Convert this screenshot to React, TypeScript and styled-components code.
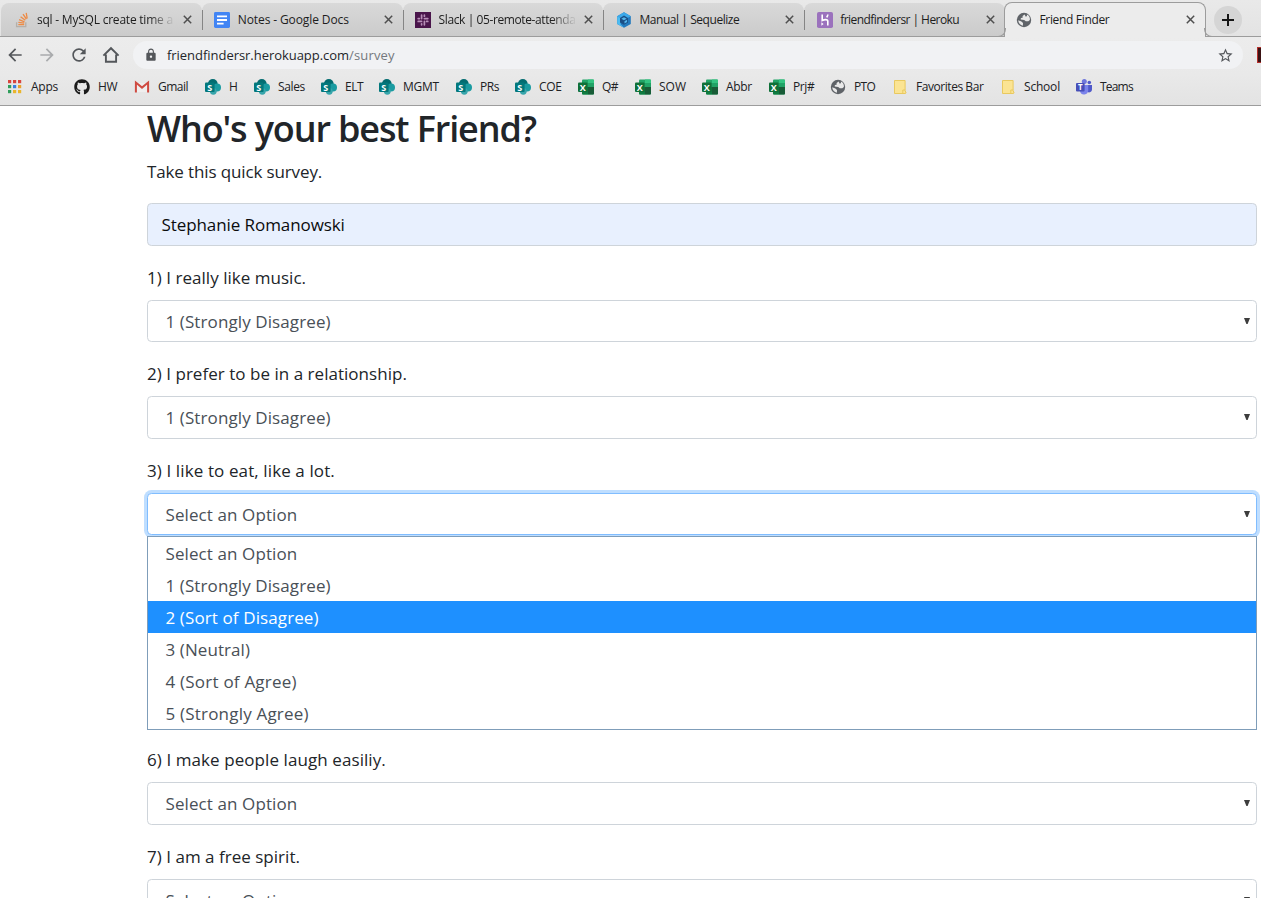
import React from 'react';
import styled, { createGlobalStyle, css } from 'styled-components';
import { MdArrowBack, MdArrowForward, MdRefresh, MdLock, MdStarBorder } from 'react-icons/md';
import { FaGithub } from 'react-icons/fa';

const GlobalStyle = createGlobalStyle`
  * { box-sizing: border-box; }
  html, body { margin: 0; background: #fff; }
  body { font-family: "Open Sans", "Noto Sans", sans-serif; color: #212529; }
`;

const Window = styled.div`
  width: 1261px;
  height: 898px;
  overflow: hidden;
  display: flex;
  flex-direction: column;
  background: #fff;
`;

/* ---------- icons ---------- */

const Svg = ({ s = 16, children }: { s?: number; children: React.ReactNode }) => (
  <svg width={s} height={s} viewBox="0 0 16 16">{children}</svg>
);

const StackOverflowIcon = () => (
  <Svg>
    <path d="M2.6 10.2v4.5h9.2v-4.5" fill="none" stroke="#b5afa9" strokeWidth="1.3" />
    <g stroke="#ee8b45" strokeWidth="1.3">
      <path d="M4.3 12.6h5.9M4.4 10.3l5.8.9M5.1 7.6l5.4 2.2M6.6 4.8l4.7 3.5M9 2.2l3.4 4.8M12.2.9l1 5.6" />
    </g>
  </Svg>
);

const DocsIcon = () => (
  <Svg>
    <rect width="16" height="16" rx="1.4" fill="#4285f4" />
    <path d="M3 4.4h10M3 8h10M3 11.6h6.6" stroke="#fff" strokeWidth="1.9" />
  </Svg>
);

const SlackIcon = () => (
  <Svg>
    <rect width="16" height="16" fill="#4a154b" />
    <g stroke="#b88fb8" strokeWidth="1.7" strokeLinecap="round">
      <path d="M6.6 3.2v3.4M3.2 6.6h1.2M9.4 6.6h3.4M9.4 3.2v1M9.4 9.4v3.4M11.6 9.4h1.2M3.2 9.4h3.4M6.6 11.8v1" />
    </g>
  </Svg>
);

const SequelizeIcon = () => (
  <Svg>
    <path d="M8 .3l6.8 3.9v7.7L8 15.8l-6.8-3.9V4.2z" fill="#2379bd" />
    <path d="M8 .3l6.8 3.9L8 8 1.2 4.2z" fill="#3ba9ea" />
    <path d="M1.2 4.2L4.600 6v6.200L8 15.800l-6.800-3.900z" fill="#4dbcf2" />
    <path d="M8 3.600l4 2.300v4.500l-4 2.300-4-2.300V5.900z" fill="#1b4f86" />
    <path d="M8 5.300l2.600 1.500L8 8.300 5.400 6.800zM8.500 9.200l2.600-1.500v2.200l-2.600 1.500z" fill="#55b7ec" />
  </Svg>
);

const HerokuIcon = () => (
  <Svg>
    <rect width="16" height="16" rx="1.8" fill="#9b72bd" />
    <path d="M5.200 2.600v5.900c1.800-.9 5.600-1.600 5.600.6v4.500M10.800 2.600c0 1.100-.4 2-1.200 2.800" fill="none" stroke="#fff" strokeWidth="1.600" />
    <path d="M4.400 10.300l2.200 1.700-2.200 1.800z" fill="#fff" />
  </Svg>
);

const GlobeIcon = () => (
  <Svg>
    <circle cx="8" cy="8" r="7.200" fill="#5f6368" />
    <path d="M8.600 2.400L6.600 4v1.700l-1.700.4-.2 1.500 3.500.3 1.600 1.400 2.500-.1 1.600-1.300c.3-2.700-1-4.700-3-5.500l.1 1.600-1.200.8z" fill="#e9e9e9" />
    <path d="M2.200 8.300l3.200 1.100 1.600 1.600-.1 2.700C4.100 13.200 2.400 11 2.200 8.300z" fill="#e9e9e9" />
  </Svg>
);

const AppsIcon = () => (
  <Svg>
    {['#d9453d', '#d9453d', '#d9453d', '#2f9e5b', '#3c7fe0', '#eaa12c', '#2f9e5b', '#eab52c', '#eab52c'].map((c, i) => (
      <rect key={i} x={1 + (i % 3) * 5} y={1 + Math.floor(i / 3) * 5} width="3.200" height="3.200" fill={c} />
    ))}
  </Svg>
);

const GmailIcon = () => (
  <Svg>
    <path d="M2.500 4v9h11V4z" fill="#efeeee" />
    <path d="M1.900 13.600V3.600L8 8.600l6.100-5v10" fill="none" stroke="#cf4a41" strokeWidth="2" />
  </Svg>
);

const IconLetter = styled.text`
  font-family: "Open Sans", sans-serif;
  font-weight: 700;
  fill: #fff;
  text-anchor: middle;
`;

const SharePointIcon = () => (
  <Svg>
    <circle cx="7.800" cy="5" r="4.900" fill="#036c70" />
    <circle cx="12" cy="8.400" r="4" fill="#1a9ba1" />
    <circle cx="8.300" cy="12.300" r="3.400" fill="#37a5ab" />
    <rect x="0" y="3.500" width="9.600" height="9.600" rx="1" fill="#03787c" />
    <IconLetter x="4.800" y="11.500" fontSize="9">S</IconLetter>
  </Svg>
);

const ExcelIcon = () => (
  <Svg>
    <rect x="4" y=".4" width="12" height="15.200" rx="1" fill="#21a366" />
    <path d="M4 8h6v7.600H5a1 1 0 0 1-1-1z" fill="#107c41" />
    <path d="M10 8h6v6.600a1 1 0 0 1-1 1h-5z" fill="#185c37" />
    <path d="M10 .4h5a1 1 0 0 1 1 1V4h-6z" fill="#33c481" />
    <rect x="0" y="3.500" width="9.600" height="9.600" rx="1" fill="#0f7038" />
    <IconLetter x="4.800" y="11.500" fontSize="9">X</IconLetter>
  </Svg>
);

const FolderIcon = () => (
  <Svg>
    <path d="M2.500 1.500h10.600v10l1 2.500-1 .5H2.500z" fill="#fbe493" stroke="#e9c95f" />
    <path d="M10.800 14v-3h2.300" fill="none" stroke="#e9c95f" />
  </Svg>
);

const TeamsIcon = () => (
  <Svg>
    <circle cx="8.300" cy="2.600" r="2.500" fill="#6f76dc" />
    <circle cx="13.300" cy="3.500" r="1.800" fill="#5059c9" />
    <path d="M11 6h5v4.500a3 3 0 0 1-4.500 2.600z" fill="#5059c9" />
    <path d="M4 6h8.200v5.500a4.200 4.200 0 0 1-8.200 1z" fill="#7b83eb" />
    <rect x="0" y="4" width="8.600" height="8.600" rx="1" fill="#464eb8" />
    <IconLetter x="4.300" y="11.300" fontSize="8">T</IconLetter>
  </Svg>
);

const HomeIcon = () => (
  <svg width="20" height="20" viewBox="0 0 20 20">
    <path d="M2.400 10.600L10 3.200l7.600 7.400M4.900 9.500v7.300h10.200V9.500" fill="none" stroke="#54575b" strokeWidth="1.900" />
  </svg>
);

const CloseIcon = () => (
  <svg width="9" height="9" viewBox="0 0 9 9">
    <path d="M.8.800l7.400 7.400M8.200.8L.8 8.200" stroke="#4f4f4f" strokeWidth="1.500" />
  </svg>
);

const PlusIcon = () => (
  <svg width="12" height="12" viewBox="0 0 12 12">
    <path d="M6 0v12M0 6h12" stroke="#151515" strokeWidth="2" />
  </svg>
);

/* ---------- browser chrome ---------- */

const TabStrip = styled.div`
  flex: none;
  height: 37px;
  display: flex;
  align-items: flex-end;
  padding-left: 1px;
  background: linear-gradient(#e9e9e9, #e3e3e3);
  border-bottom: 1px solid #9c9c9c;
`;

const TabBox = styled.div<{ $active?: boolean; $divided?: boolean }>`
  flex: none;
  position: relative;
  width: ${p => (p.$active ? 202 : 200.8)}px;
  height: 33px;
  display: flex;
  align-items: center;
  padding: 0 10px 0 12.500px;
  border-radius: 8px 8px 0 0;
  background: linear-gradient(#d9d9d9, #cbcbcb);
  ${p => p.$divided && css`
    &::after {
      content: '';
      position: absolute;
      right: -1px;
      top: 7px;
      width: 1px;
      height: 20px;
      background: #858585;
      z-index: 1;
    }
  `}
  ${p => p.$active && css`
    height: 35px;
    margin: 0 0 -1px -1px;
    padding: 0 10px 1px 11px;
    background: #ececec;
    border: 1px solid #9c9c9c;
    border-bottom: 0;
    &::before, &::after {
      content: '';
      position: absolute;
      bottom: 0;
      width: 8px;
      height: 8px;
      border-bottom: 1px solid #9c9c9c;
    }
    &::before { left: -8px; border-right: 1px solid #9c9c9c; border-bottom-right-radius: 8px; }
    &::after { right: -8px; border-left: 1px solid #9c9c9c; border-bottom-left-radius: 8px; }
  `}
`;

const Text = styled.span<{ $track?: number }>`
  white-space: nowrap;
  letter-spacing: ${p => p.$track ?? 0}px;
`;

const TabTitle = styled.div<{ $fade?: boolean }>`
  width: 138px;
  margin-left: 7.500px;
  overflow: hidden;
  font-size: 12px;
  line-height: 18px;
  color: #1d1d1d;
  ${p => p.$fade && css`
    mask-image: linear-gradient(to right, #000 112px, transparent 138px);
  `}
`;

const CloseButton = styled.span`
  display: flex;
  margin-left: auto;
`;

const NewTab = styled.div`
  width: 28px;
  height: 28px;
  margin: 0 0 2px 8px;
  display: flex;
  align-items: center;
  justify-content: center;
  border-radius: 50%;
  background: #d5d5d5;
`;

const Toolbar = styled.div`
  flex: none;
  height: 37px;
  display: flex;
  align-items: center;
  padding-bottom: 1px;
  background: linear-gradient(#ececec, #e9e9e9);
`;

const NavIcons = styled.div`
  display: flex;
  gap: 12px;
  padding-left: 5px;
  width: 133px;
  color: #54575b;
  > :nth-child(2) { color: #a9abad; }
`;

const Omnibox = styled.div`
  width: 1110px;
  height: 28px;
  display: flex;
  align-items: center;
  padding: 0 9px 0 11px;
  border-radius: 14px;
  background: #f1f2f4;
  color: #54575b;
`;

const Url = styled.div`
  flex: 1;
  margin-left: 9px;
  font-size: 13px;
  line-height: 18px;
  color: #24262a;
`;

const UrlPath = styled(Text)`
  color: #74787d;
`;

const Extension = styled.div`
  width: 4px;
  height: 16px;
  margin-left: 14px;
  background: #3a1213;
  border: 1px solid #b5302c;
  border-right: 0;
`;

const BookmarksBar = styled.div`
  flex: none;
  height: 32px;
  display: flex;
  align-items: center;
  padding: 0 0 5px 7px;
  background: linear-gradient(#e9e9e9, #e3e3e3);
  border-bottom: 1px solid #9c9c9c;
`;

const Bookmark = styled.div<{ $width: number }>`
  flex: none;
  width: ${p => p.$width}px;
  display: flex;
  align-items: center;
  gap: 8px;
  font-size: 12px;
  line-height: 16px;
  color: #202124;
  ${Text} { padding-bottom: 1px; }
`;

/* ---------- survey page ---------- */

const Page = styled.main`
  flex: 1;
  min-height: 0;
  overflow: hidden;
  padding: 0 4px 0 147px;
  font-size: 17px;
  line-height: 26px;
`;

const Title = styled.h1`
  margin: 0 0 7px;
  font-size: 36px;
  line-height: 46px;
  font-weight: 600;
`;

const Lead = styled.p`
  margin: 0 0 19px;
  line-height: 25px;
`;

const Field = styled.div<{ $filled?: boolean; $focused?: boolean }>`
  height: 42.5px;
  display: flex;
  align-items: center;
  justify-content: space-between;
  padding: 1.500px 6px 0 17.5px;
  border: 1px solid #ced4da;
  border-radius: 4.4px;
  background: #fff;
  color: #495057;
  ${p => p.$filled && css`
    padding-left: 13.500px;
    background: #e8f0fe;
    color: #0b0c0d;
  `}
  ${p => p.$focused && css`
    border-color: #80bdff;
    box-shadow: 0 0 0 3px #bfdeff;
  `}
`;

const Question = styled.label`
  display: block;
  height: 26px;
  margin: 19px 0 9px;
`;

const Menu = styled.div`
  position: relative;
  height: 194px;
  margin: 1px 0 -2px;
  border: 1px solid #7f9db9;
  background: #fff;
  color: #495057;
`;

const Option = styled.div<{ $selected?: boolean }>`
  height: 32px;
  padding-left: 17.5px;
  line-height: 33px;
  ${p => p.$selected && css`
    background: #1e90ff;
    color: #fff;
  `}
`;

const Arrow = () => (
  <svg width="6" height="6" viewBox="0 0 6 6"><path d="M0 0h6L3.600 6H2.400z" fill="#3d3d3d" /></svg>
);

const ArrowSlot = styled.span`
  display: flex;
  padding-bottom: 1.500px;
`;

const Select = ({ value, track, focused }: { value: string; track: number; focused?: boolean }) => (
  <Field $focused={focused}>
    <Text $track={track}>{value}</Text>
    <ArrowSlot><Arrow /></ArrowSlot>
  </Field>
);

const tabs = [
  { icon: <StackOverflowIcon />, title: 'sql - MySQL create time a', track: -0.22, fade: true },
  { icon: <DocsIcon />, title: 'Notes - Google Docs', track: -0.11 },
  { icon: <SlackIcon />, title: 'Slack | 05-remote-attenda', track: -0.4, fade: true },
  { icon: <SequelizeIcon />, title: 'Manual | Sequelize', track: -0.44 },
  { icon: <HerokuIcon />, title: 'friendfindersr | Heroku', track: -0.55 },
];

const sp = <SharePointIcon />;
const xl = <ExcelIcon />;
const bookmarks: [React.ReactNode, string, number, number][] = [
  [<AppsIcon />, 'Apps', 67, -0.25],
  [<FaGithub size={16} color="#1b1b1b" />, 'HW', 60, -0.4],
  [<GmailIcon />, 'Gmail', 71, -0.5],
  [sp, 'H', 49, 0],
  [sp, 'Sales', 67, -0.35],
  [sp, 'ELT', 58, -0.5],
  [sp, 'MGMT', 77, -0.25],
  [sp, 'PRs', 59, -0.4],
  [sp, 'COE', 63, -0.3],
  [xl, 'Q#', 57, -0.5],
  [xl, 'SOW', 67, 0],
  [xl, 'Abbr', 67, -0.3],
  [xl, 'Prj#', 61, -0.4],
  [<GlobeIcon />, 'PTO', 62, -0.7],
  [<FolderIcon />, 'Favorites Bar', 108, -0.45],
  [<FolderIcon />, 'School', 76, -0.2],
  [<TeamsIcon />, 'Teams', 70, -0.8],
];

const options: [string, number][] = [
  ['Select an Option', 0.1],
  ['1 (Strongly Disagree)', 0.1],
  ['2 (Sort of Disagree)', 0.11],
  ['3 (Neutral)', 0.08],
  ['4 (Sort of Agree)', 0.22],
  ['5 (Strongly Agree)', 0.2],
];

export default function App() {
  return (
    <Window>
      <GlobalStyle />
      <TabStrip>
        {tabs.map((t, i) => (
          <TabBox key={t.title} $divided={i < 4}>
            {t.icon}
            <TabTitle $fade={t.fade}><Text $track={t.track}>{t.title}</Text></TabTitle>
            <CloseButton><CloseIcon /></CloseButton>
          </TabBox>
        ))}
        <TabBox $active>
          <GlobeIcon />
          <TabTitle><Text $track={-0.33}>Friend Finder</Text></TabTitle>
          <CloseButton><CloseIcon /></CloseButton>
        </TabBox>
        <NewTab><PlusIcon /></NewTab>
      </TabStrip>
      <Toolbar>
        <NavIcons>
          <MdArrowBack size={20} />
          <MdArrowForward size={20} />
          <MdRefresh size={20} />
          <HomeIcon />
        </NavIcons>
        <Omnibox>
          <MdLock size={14} />
          <Url>
            <Text $track={-0.04}>friendfindersr.herokuapp.com</Text>
            <UrlPath $track={0.15}>/survey</UrlPath>
          </Url>
          <MdStarBorder size={17} />
        </Omnibox>
        <Extension />
      </Toolbar>
      <BookmarksBar>
        {bookmarks.map(([icon, label, width, track]) => (
          <Bookmark key={label} $width={width}>
            {icon}
            <Text $track={track}>{label}</Text>
          </Bookmark>
        ))}
      </BookmarksBar>
      <Page>
        <Title><Text $track={-1.13}>Who's your best Friend?</Text></Title>
        <Lead><Text $track={-0.13}>Take this quick survey.</Text></Lead>
        <Field $filled><Text $track={-0.08}>Stephanie Romanowski</Text></Field>
        <Question><Text $track={0.03}>1) I really like music.</Text></Question>
        <Select value="1 (Strongly Disagree)" track={0.1} />
        <Question><Text $track={0.03}>2) I prefer to be in a relationship.</Text></Question>
        <Select value="1 (Strongly Disagree)" track={0.1} />
        <Question><Text $track={0.11}>3) I like to eat, like a lot.</Text></Question>
        <Select value="Select an Option" track={0.1} focused />
        <Menu>
          {options.map(([label, track]) => (
            <Option key={label} $selected={label.startsWith('2')}><Text $track={track}>{label}</Text></Option>
          ))}
        </Menu>
        <Question><Text $track={0.08}>6) I make people laugh easiliy.</Text></Question>
        <Select value="Select an Option" track={0.1} />
        <Question><Text $track={0.02}>7) I am a free spirit.</Text></Question>
        <Select value="Select an Option" track={0.1} />
      </Page>
    </Window>
  );
}
